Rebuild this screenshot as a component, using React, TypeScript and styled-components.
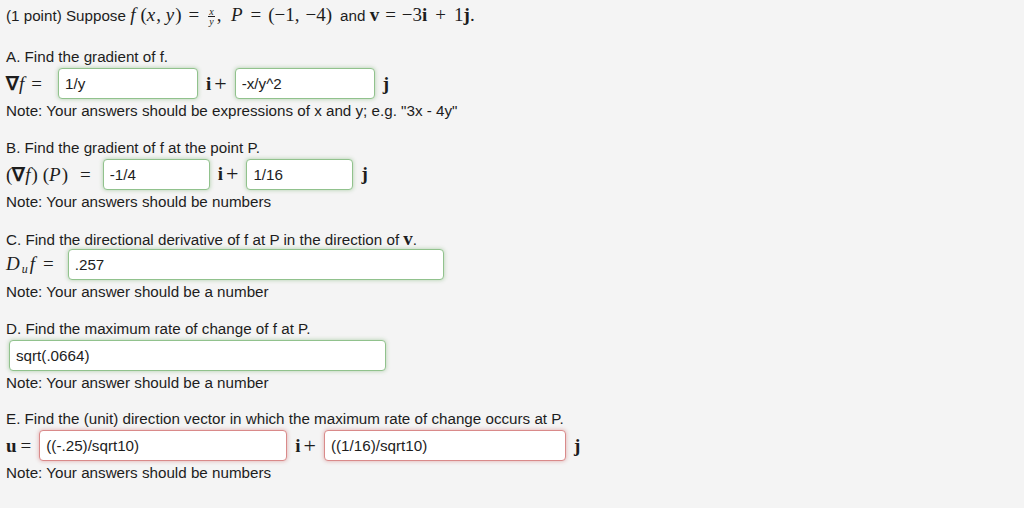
import React from 'react';
import styled, { createGlobalStyle } from 'styled-components';

const GlobalStyle = createGlobalStyle`
  html, body {
    margin: 0;
    padding: 0;
    background: #f4f4f4;
  }
  body {
    font-family: "Liberation Sans", Arial, sans-serif;
    font-size: 15.2px;
    color: #1d1d1d;
  }
`;

const Page = styled.div`
  padding: 5px 6px;
`;

const Title = styled.div`
  line-height: 22px;
  height: 22px;
  margin-bottom: 21px;
  white-space: nowrap;
`;

const Math = styled.span`
  font-family: "Liberation Serif", "Times New Roman", serif;
  font-size: 19px;
  line-height: 1;
  white-space: nowrap;
`;

const V = styled.i<{ $r?: number }>`
  font-style: italic;
  padding-right: 1px;
  margin-right: ${(p) => p.$r ?? 0}px;
`;

const Bold = styled.b`
  font-weight: 700;
`;

const Op = styled.span<{ $l?: number; $r?: number }>`
  margin-left: ${(p) => p.$l ?? 6}px;
  margin-right: ${(p) => p.$r ?? 6}px;
`;

const Sub = styled.sub`
  font-size: 12px;
  font-style: italic;
  vertical-align: -3px;
  margin: 0 2px 0 1px;
`;

const Frac = styled.span`
  display: inline-flex;
  flex-direction: column;
  align-items: center;
  vertical-align: middle;
  font-size: 10px;
  font-style: italic;
  line-height: 9px;
  margin: 0 2px;
  & > span:first-child {
    border-bottom: 1px solid #1d1d1d;
    padding: 0 1px;
  }
`;

const Gap = styled.span<{ $w: number }>`
  display: inline-block;
  width: ${(p) => p.$w}px;
`;

const Section = styled.section`
  margin-bottom: 18.6px;
`;

const Label = styled.div`
  line-height: 18px;
  height: 18px;
  white-space: nowrap;
`;

const Row = styled.div<{ $indent?: number }>`
  display: flex;
  align-items: center;
  gap: 8px;
  height: 31px;
  margin-top: 2px;
  padding-left: ${(p) => p.$indent ?? 0}px;
`;

const Answer = styled.input<{ $w: number; $bad?: boolean }>`
  width: ${(p) => p.$w}px;
  height: 31px;
  box-sizing: border-box;
  margin: 0;
  padding: 0 6px;
  border-radius: 4px;
  background: #fff;
  font-family: "Liberation Sans", Arial, sans-serif;
  font-size: 15.2px;
  color: #1d1d1d;
  outline: none;
  border: 1px solid ${(p) => (p.$bad ? '#d98a8a' : '#91c28d')};
  box-shadow: 0 0 4px ${(p) => (p.$bad ? 'rgba(200, 80, 80, 0.45)' : 'rgba(90, 160, 80, 0.45)')};
`;

const Unit = styled.span`
  font-family: "Liberation Serif", "Times New Roman", serif;
  font-size: 19px;
  font-weight: 700;
  display: inline-flex;
  align-items: center;
  & > span {
    font-weight: 400;
    font-size: 22px;
    margin-left: 3px;
  }
`;

const Note = styled.div`
  line-height: 18px;
  height: 18px;
  margin-top: 3px;
`;

function Field({ w, value, bad }: { w: number; value: string; bad?: boolean }) {
  return <Answer $w={w} $bad={bad} value={value} readOnly />;
}

function Plus() {
  return (
    <Unit>
      i<span>+</span>
    </Unit>
  );
}

export default function App() {
  return (
    <>
      <GlobalStyle />
      <Page>
        <Title>
          (1 point) Suppose{' '}
          <Math>
            <V $r={4}>f</V>(<V>x</V>,&nbsp;<V>y</V>)<Op $l={7} $r={7}>=</Op>
            <Frac>
              <span>x</span>
              <span>y</span>
            </Frac>
            ,&nbsp;&nbsp;<V>P</V>
            <Op $l={7} $r={7}>=</Op>(−1,<Gap $w={6} />−4)
          </Math>
          <Gap $w={8} />
          and{' '}
          <Math>
            <Bold>v</Bold>
            <Op>=</Op>−3<Bold>i</Bold>
            <Op $l={8} $r={8}>+</Op>1<Bold>j</Bold>.
          </Math>
        </Title>

        <Section>
          <Label>A. Find the gradient of f.</Label>
          <Row>
            <Math>
              <Bold>∇</Bold>
              <V>f</V>
              <Op $r={8}>=</Op>
            </Math>
            <Field w={140} value="1/y" />
            <Plus />
            <Field w={140} value="-x/y^2" />
            <Unit>j</Unit>
          </Row>
          <Note>Note: Your answers should be expressions of x and y; e.g. "3x - 4y"</Note>
        </Section>

        <Section>
          <Label>B. Find the gradient of f at the point P.</Label>
          <Row>
            <Math>
              (<Bold>∇</Bold>
              <V>f</V>) (<V>P</V>)<Op $l={12} $r={4}>=</Op>
            </Math>
            <Field w={107} value="-1/4" />
            <Plus />
            <Field w={107} value="1/16" />
            <Unit>j</Unit>
          </Row>
          <Note>Note: Your answers should be numbers</Note>
        </Section>

        <Section>
          <Label>
            C. Find the directional derivative of f at P in the direction of{' '}
            <Math>
              <Bold>v</Bold>
            </Math>
            .
          </Label>
          <Row>
            <Math>
              <V>D</V>
              <Sub>u</Sub>
              <V>f</V>
              <Op $l={7} $r={6}>=</Op>
            </Math>
            <Field w={376} value=".257" />
          </Row>
          <Note>Note: Your answer should be a number</Note>
        </Section>

        <Section>
          <Label>D. Find the maximum rate of change of f at P.</Label>
          <Row $indent={3}>
            <Field w={377} value="sqrt(.0664)" />
          </Row>
          <Note>Note: Your answer should be a number</Note>
        </Section>

        <Section>
          <Label>E. Find the (unit) direction vector in which the maximum rate of change occurs at P.</Label>
          <Row>
            <Math>
              <Bold>u</Bold>
              <Op $l={4} $r={0}>=</Op>
            </Math>
            <Field w={248} value="((-.25)/sqrt10)" bad />
            <Plus />
            <Field w={242} value="((1/16)/sqrt10)" bad />
            <Unit>j</Unit>
          </Row>
          <Note>Note: Your answers should be numbers</Note>
        </Section>
      </Page>
    </>
  );
}
